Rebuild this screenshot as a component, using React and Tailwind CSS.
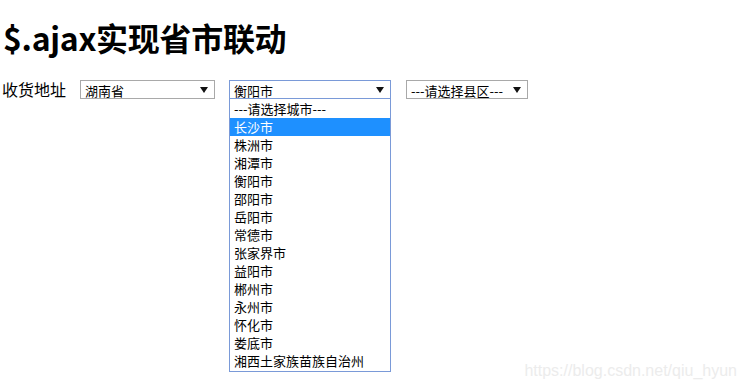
const cities = [
  "---请选择城市---",
  "长沙市",
  "株洲市",
  "湘潭市",
  "衡阳市",
  "邵阳市",
  "岳阳市",
  "常德市",
  "张家界市",
  "益阳市",
  "郴州市",
  "永州市",
  "怀化市",
  "娄底市",
  "湘西土家族苗族自治州",
];

const Caret = () => (
  <svg width="8" height="6" viewBox="0 0 8 6" className="shrink-0">
    <path d="M0 0 L8 0 L4 6 Z" fill="#111" />
  </svg>
);

const FakeSelect = ({ value, width, focused }) => (
  <div
    className={`flex h-[19px] items-center justify-between pl-[4px] pr-[6px] text-[13px] leading-none text-black ${
      focused ? "border border-[#7a9ad8]" : "border border-[#a9a9a9]"
    } ${width}`}
  >
    <span className="pt-[1px]">{value}</span>
    <Caret />
  </div>
);

export default function App() {
  return (
    <div className="relative h-[391px] w-[746px] overflow-hidden bg-white font-['Microsoft_YaHei','Noto_Sans_CJK_SC',sans-serif] text-black">
      <h1 className="pl-[3px] pt-[17px] text-[32px] font-bold leading-[40px] tracking-[-0.3px]">
        $.ajax实现省市联动
      </h1>
      <div className="mt-[23px] flex items-start pl-[2px]">
        <span className="mr-[14px] text-[16px] leading-[19px]">收货地址</span>
        <FakeSelect value="湖南省" width="w-[135px]" />
        <div className="relative ml-[14px]">
          <FakeSelect value="衡阳市" width="w-[162px]" focused />
          <ul className="absolute left-0 top-[18px] w-[162px] border border-[#7a9ad8] bg-white py-[1px] text-[13px]">
            {cities.map((c, i) => (
              <li
                key={c}
                className={`h-[18px] pl-[4px] leading-[18px] ${
                  i === 1 ? "bg-[#1e90ff] text-white" : ""
                }`}
              >
                {c}
              </li>
            ))}
          </ul>
        </div>
        <div className="ml-[15px]">
          <FakeSelect value="---请选择县区---" width="w-[122px]" />
        </div>
      </div>
      <div className="absolute bottom-[8px] right-[9px] font-['Liberation_Sans',sans-serif] text-[16px] text-[#ececec]">
        https://blog.csdn.net/qiu_hyun
      </div>
    </div>
  );
}
